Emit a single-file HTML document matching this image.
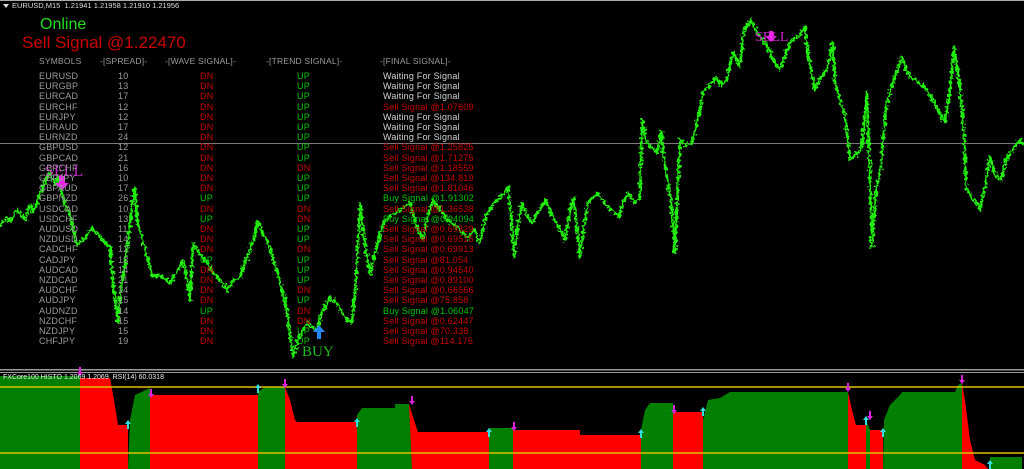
<!DOCTYPE html>
<html><head><meta charset="utf-8"><style>
body{margin:0;background:#000;width:1024px;height:469px;overflow:hidden;position:relative;font-family:"Liberation Sans",sans-serif}
.t{position:absolute;white-space:nowrap}
.tb{position:absolute;font-size:9px;line-height:10.2px;letter-spacing:0.2px}
.c{position:absolute;font-size:8.5px;white-space:nowrap;letter-spacing:0.2px}
.g{color:#9b9b9b}.r{color:#cc0000}.u{color:#00c800}.w{color:#d2d2d2}
</style></head><body>
<svg width="1024" height="469" style="position:absolute;left:0;top:0">
<defs><filter id="j" x="-5%" y="-5%" width="110%" height="110%"><feTurbulence type="fractalNoise" baseFrequency="0.35" numOctaves="2" seed="3"/><feDisplacementMap in="SourceGraphic" scale="7" xChannelSelector="R" yChannelSelector="G"/></filter></defs>
<rect x="0" y="0" width="1024" height="1" fill="#aaa"/>
<line x1="0" y1="143.5" x2="1024" y2="143.5" stroke="#7a7a7a" stroke-width="1"/>
<polyline filter="url(#j)" fill="none" stroke="#22ee11" stroke-width="2.6" stroke-linejoin="round" points="0,225 6,218 10,222 17,210 25,220 30,205 33,212 38,200 42,190 45,180 50,172 55,185 58,176 62,192 65,205 70,215 72,225 77,245 85,238 92,228 97,233 104,242 110,247 114,290 118,323 121,290 123,277 128,240 133,197 135,188 137,220 145,250 153,277 160,275 170,283 178,270 183,260 188,285 190,300 193,243 200,255 207,262 213,273 220,280 227,290 234,280 240,277 248,255 255,235 258,220 262,232 267,240 275,265 282,290 287,310 290,335 293,357 298,340 303,330 307,323 312,328 317,330 322,312 330,297 338,305 345,318 352,323 356,280 360,203 365,245 370,273 376,250 383,223 392,215 400,210 410,203 416,225 423,240 428,215 433,200 440,210 450,222 460,230 468,238 474,230 480,243 486,215 494,203 500,198 508,187 511,215 514,257 518,225 522,203 527,215 532,223 538,212 546,200 552,215 558,225 565,240 570,210 574,197 577,230 580,257 584,225 588,203 593,198 598,193 606,205 612,210 619,217 624,200 629,193 634,202 640,200 642,120 646,140 652,148 657,153 661,130 664,160 667,177 671,200 675,253 678,180 680,140 686,145 692,143 698,118 704,90 710,85 716,77 721,85 727,80 730,65 733,53 737,60 740,67 742,45 744,30 748,25 751,20 756,30 762,40 768,47 774,62 780,70 786,52 792,40 798,37 805,27 808,55 812,75 815,90 820,78 827,70 830,55 833,43 835,83 840,100 845,117 848,140 850,160 856,155 862,147 865,110 867,93 869,150 872,247 876,190 881,167 884,130 886,107 892,85 897,70 902,57 906,70 911,77 918,82 925,88 931,97 938,110 945,123 950,90 954,47 959,80 964,133 966,187 972,198 978,205 980,210 985,185 990,157 995,175 1001,180 1006,160 1012,150 1015,147 1020,140 1024,145"/>
<rect x="0" y="369" width="1024" height="1.5" fill="#9a9a9a"/>
<rect x="0" y="372" width="1024" height="1" fill="#9a9a9a"/>
<polygon fill="#007f00" points="0,376 80,376 80,469 0,469"/>
<polygon fill="#ff0000" points="80,378 110,378 114,400 118,425 128,425 128,469 80,469"/>
<polygon fill="#007f00" points="128,469 130,420 135,395 150,388 150,469"/>
<polygon fill="#ff0000" points="150,395 258,395 258,469 150,469"/>
<polygon fill="#007f00" points="258,469 258,392 265,387 285,387 285,469"/>
<polygon fill="#ff0000" points="285,387 290,400 295,420 297,422 357,422 357,469 285,469"/>
<polygon fill="#007f00" points="357,469 357,415 362,408 395,408 395,404 409,404 412,469"/>
<polygon fill="#ff0000" points="409,404 414,420 418,432 489,432 489,469 412,469"/>
<polygon fill="#007f00" points="489,469 489,428 513,428 513,469"/>
<polygon fill="#ff0000" points="513,430 580,430 580,435 641,435 641,469 513,469"/>
<polygon fill="#007f00" points="641,469 641,430 645,410 650,403 673,403 673,469"/>
<polygon fill="#ff0000" points="673,412 703,412 703,469 673,469"/>
<polygon fill="#007f00" points="703,469 703,420 708,400 720,398 730,392 848,392 848,469"/>
<polygon fill="#ff0000" points="848,392 852,410 856,425 866,425 866,469 848,469"/>
<polygon fill="#007f00" points="866,469 866,420 870,430 870,469"/>
<polygon fill="#ff0000" points="870,430 883,430 883,469 870,469"/>
<polygon fill="#007f00" points="883,469 884,420 890,405 900,395 902,392 955,392 958,385 962,383 962,469"/>
<polygon fill="#ff0000" points="962,383 965,400 970,440 975,460 985,465 988,469 962,469"/>
<polygon fill="#007f00" points="990,469 990,457 1022,457 1022,469"/>
<rect x="1022" y="373" width="2" height="96" fill="#000"/>
<line x1="0" y1="387" x2="1024" y2="387" stroke="#e0c000" stroke-width="1.5"/>
<line x1="0" y1="453" x2="1024" y2="453" stroke="#e0c000" stroke-width="1.5"/>
<g fill="#33dddd">
<path d="M128,420 l-3,4 h2 v5 h2 v-5 h2z"/><path d="M258,384 l-3,4 h2 v5 h2 v-5 h2z"/><path d="M357,418 l-3,4 h2 v5 h2 v-5 h2z"/><path d="M489,428 l-3,4 h2 v5 h2 v-5 h2z"/><path d="M641,429 l-3,4 h2 v5 h2 v-5 h2z"/><path d="M703,407 l-3,4 h2 v5 h2 v-5 h2z"/><path d="M866,416 l-3,4 h2 v5 h2 v-5 h2z"/><path d="M883,428 l-3,4 h2 v5 h2 v-5 h2z"/><path d="M990,460 l-3,4 h2 v5 h2 v-5 h2z"/>
</g>
<g fill="#dd22dd">
<path d="M80,376 l-3,-4 h2 v-5 h2 v5 h2z"/><path d="M285,388 l-3,-4 h2 v-5 h2 v5 h2z"/><path d="M151,398 l-3,-4 h2 v-5 h2 v5 h2z"/><path d="M412,405 l-3,-4 h2 v-5 h2 v5 h2z"/><path d="M514,431 l-3,-4 h2 v-5 h2 v5 h2z"/><path d="M674,414 l-3,-4 h2 v-5 h2 v5 h2z"/><path d="M848,392 l-3,-4 h2 v-5 h2 v5 h2z"/><path d="M870,420 l-3,-4 h2 v-5 h2 v5 h2z"/><path d="M962,384 l-3,-4 h2 v-5 h2 v5 h2z"/>
</g>
<path d="M62,190 l-7,-7 h4 v-7 h6 v7 h4z" fill="#ee22ee"/>
<path d="M771,42 l-6,-6 h4 v-5 h4 v5 h4z" fill="#ee22ee"/>
<path d="M319,325 l-6,7 h4 v7 h4 v-7 h4z" fill="#2288ff"/>
<text x="45" y="176" font-family="Liberation Serif" font-size="16" fill="#cc22cc">SELL</text>
<text x="755" y="41" font-family="Liberation Serif" font-size="14" fill="#cc22cc">SELL</text>
<text x="302" y="356" font-family="Liberation Serif" font-size="15" fill="#22bb22">BUY</text>
<path d="M3,4 h6 l-3,4z" fill="#ddd"/>
</svg>
<div class="t" style="left:12px;top:1px;font-size:7.5px;color:#ddd">EURUSD,M15&nbsp; 1.21941 1.21958 1.21910 1.21956</div>
<div class="t" style="left:40px;top:16px;font-size:16px;color:#22dd22">Online</div>
<div class="t" style="left:22px;top:33px;font-size:17px;color:#cc0000">Sell Signal @1.22470</div>
<div class="c g" style="left:39px;top:56px">SYMBOLS</div>
<div class="c g" style="left:100px;top:56px">-[SPREAD]-</div>
<div class="c g" style="left:165px;top:56px">-[WAVE SIGNAL]-</div>
<div class="c g" style="left:266px;top:56px">-[TREND SIGNAL]-</div>
<div class="c g" style="left:380px;top:56px">-[FINAL SIGNAL]-</div>
<div class="tb g" style="left:39px;top:71px">EURUSD<br>EURGBP<br>EURCAD<br>EURCHF<br>EURJPY<br>EURAUD<br>EURNZD<br>GBPUSD<br>GBPCAD<br>GBPCHF<br>GBPJPY<br>GBPAUD<br>GBPNZD<br>USDCAD<br>USDCHF<br>AUDUSD<br>NZDUSD<br>CADCHF<br>CADJPY<br>AUDCAD<br>NZDCAD<br>AUDCHF<br>AUDJPY<br>AUDNZD<br>NZDCHF<br>NZDJPY<br>CHFJPY</div>
<div class="tb g" style="left:118px;top:71px">10<br>13<br>17<br>12<br>12<br>17<br>24<br>12<br>21<br>16<br>10<br>17<br>26<br>10<br>13<br>11<br>14<br>12<br>13<br>14<br>21<br>14<br>15<br>14<br>15<br>15<br>19</div>
<div class="tb" style="left:200px;top:71px"><span class="r">DN<br>DN<br>DN<br>DN<br>DN<br>DN<br>DN<br>DN<br>DN<br>DN<br>DN<br>DN</span><br><span class="u">UP</span><br><span class="r">DN</span><br><span class="u">UP</span><br><span class="r">DN<br>DN<br>DN</span><br><span class="u">UP</span><br><span class="r">DN<br>DN<br>DN<br>DN</span><br><span class="u">UP</span><br><span class="r">DN<br>DN<br>DN</span></div>
<div class="tb" style="left:297px;top:71px"><span class="u">UP<br>UP<br>UP<br>UP<br>UP<br>UP<br>UP<br>UP<br>UP</span><br><span class="r">DN</span><br><span class="u">UP<br>UP<br>UP</span><br><span class="r">DN<br>DN</span><br><span class="u">UP<br>UP</span><br><span class="r">DN</span><br><span class="u">UP<br>UP<br>UP</span><br><span class="r">DN</span><br><span class="u">UP</span><br><span class="r">DN<br>DN</span><br><span class="u">UP<br>UP</span></div>
<div class="tb" style="left:383px;top:71px"><span class="w">Waiting For Signal<br>Waiting For Signal<br>Waiting For Signal</span><br><span class="r">Sell Signal @1.07609</span><br><span class="w">Waiting For Signal<br>Waiting For Signal<br>Waiting For Signal</span><br><span class="r">Sell Signal @1.25825<br>Sell Signal @1.71275<br>Sell Signal @1.18559<br>Sell Signal @134.819<br>Sell Signal @1.81046</span><br><span class="u">Buy Signal @1.91302</span><br><span class="r">Sell Signal @1.36538</span><br><span class="u">Buy Signal @0.94094</span><br><span class="r">Sell Signal @0.69329<br>Sell Signal @0.69515<br>Sell Signal @0.69913<br>Sell Signal @81.054<br>Sell Signal @0.94540<br>Sell Signal @0.89100<br>Sell Signal @0.66566<br>Sell Signal @75.858</span><br><span class="u">Buy Signal @1.06047</span><br><span class="r">Sell Signal @0.62447<br>Sell Signal @70.338<br>Sell Signal @114.175</span></div>
<div class="t" style="left:3px;top:374px;font-size:7px;color:#eee">FXCore100 HISTO 1.2069 1.2069&nbsp; RSI(14) 60.0318</div>
</body></html>
